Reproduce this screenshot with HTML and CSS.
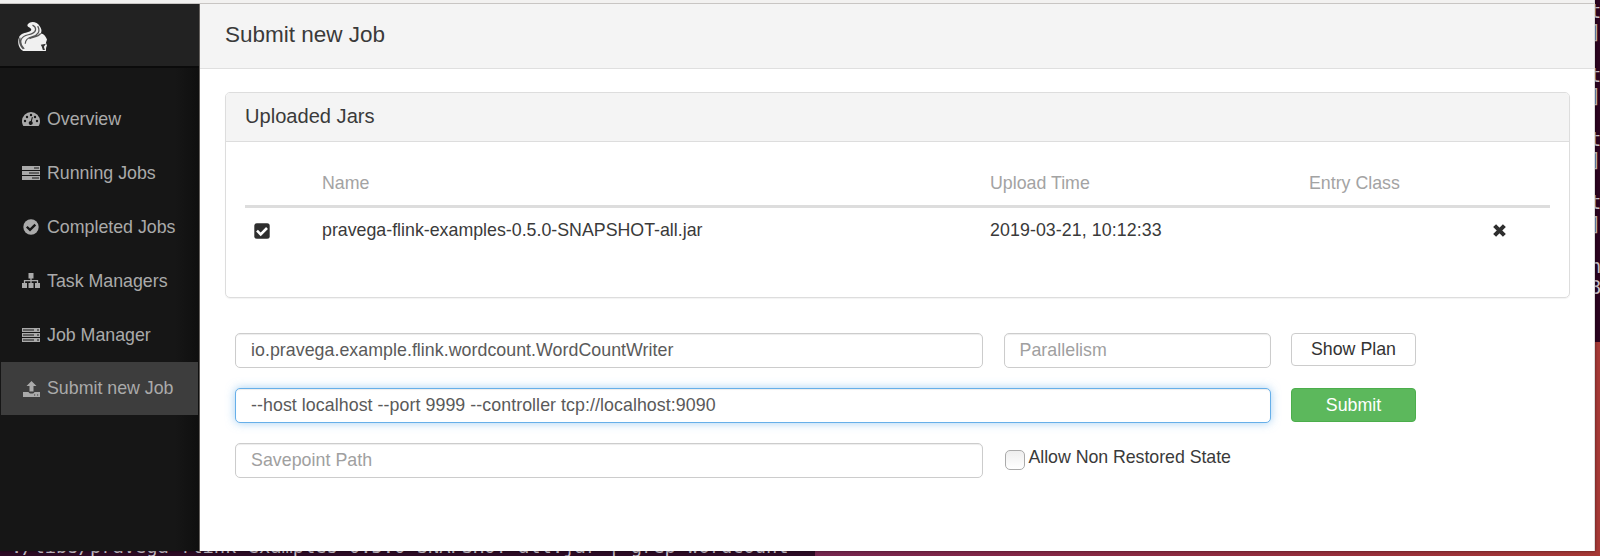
FILE: index.html
```
<!DOCTYPE html>
<html lang="en">
<head>
<meta charset="utf-8">
<title>Submit new Job</title>
<link rel="stylesheet" href="styles.css">
</head>
<body>
<div class="desktop">
  <div class="terminal">
    <div class="terminal-edge"><span>t</span><span>]</span><span></span><span>t</span><span>]</span><span></span><span>t</span><span>]</span><span></span><span>t</span><span>]</span><span></span><span>n</span><span>8</span></div>
  </div>
  <div class="terminal-foot"><span class="terminal-line">./libs/pravega-flink-examples-0.5.0-SNAPSHOT-all.jar | grep wordcount</span></div>
  <div class="window">
    <div class="chrome"></div>
    <div class="app">
      <aside class="sidebar">
        <div class="brand">
          <svg class="logo" viewBox="0 0 28 28"><path fill="#f0f0f0" d="M9 3c2-4 9-4 12 1 2 3 2 5 1 7 3 0 5 3 6 6l-1 3 1 3c-1 1-1 3-1 5H5C1 26-1 20 1 15c1-3 4-4 8-5 3-1 5-2 3-4-1-1-3-1-3-3z"/><path fill="none" stroke="#555" stroke-width="1.200" d="M14 3c4 2 4 6 0 8-4 2-9 1-11 6-1 3 0 6 3 9M19 4c3 5 0 9-5 10-4 1-7 3-7 7M22 11c-3 4-7 3-11 5M2 15c-1 4 0 8 3 11"/><path fill="#333" d="M22 22l5-1-2 3 1 3h-2l-1-3z"/></svg>
        </div>
        <nav class="menu">
          <a class="item"><svg class="icon" viewBox="0 0 18 16"><path fill="currentColor" d="M9 1a9 9 0 0 0-9 9c0 2 .5 3.600 1.400 5h15.200c.9-1.400 1.400-3 1.400-5a9 9 0 0 0-9-9z"/><g fill="#161616"><circle cx="3" cy="10" r="1.200"/><circle cx="5" cy="6" r="1.200"/><circle cx="9" cy="4" r="1.200"/><circle cx="13" cy="6" r="1.200"/><circle cx="15" cy="10" r="1.200"/><path d="M9.900 6l1 .3-1.100 4a2 2 0 1 1-1-.3z"/></g></svg>Overview</a>
          <a class="item"><svg class="icon" viewBox="0 0 18 16"><path fill="currentColor" d="M0 1h18v4H0zM0 6h18v4H0zM0 11h18v4H0z"/><path fill="#161616" d="M12 2.500h5v1h-5zM7 7.500h10v1H7zM10 12.500h7v1h-7z"/></svg>Running Jobs</a>
          <a class="item"><svg class="icon" viewBox="0 0 18 16"><circle cx="9" cy="8" r="7.700" fill="currentColor"/><path fill="none" stroke="#161616" stroke-width="2.300" d="M4.800 7.700l3.200 3.200 5.300-5.300"/></svg>Completed Jobs</a>
          <a class="item"><svg class="icon" viewBox="0 0 18 16"><path fill="currentColor" d="M6.500 0h5v5.500h-5zM0 10h5v5H0zM6.500 10h5v5h-5zM13 10h5v5h-5z"/><path fill="none" stroke="currentColor" stroke-width="1.300" d="M9 5v6M2.500 11V7.700h13V11"/></svg>Task Managers</a>
          <a class="item"><svg class="icon" viewBox="0 0 18 16"><path fill="currentColor" d="M0 1h18v4H0zM0 6h18v4H0zM0 11h18v4H0z"/><path fill="#161616" d="M1 2.500h11v1H1zM1 7.500h11v1H1zM1 12.500h11v1H1zM15 2.500h2v1h-2zM15 7.500h2v1h-2zM15 12.500h2v1h-2z"/></svg>Job Manager</a>
          <a class="item active"><svg class="icon" viewBox="0 0 18 16"><path fill="currentColor" d="M9.500 0l5 5h-3v5.500h-4V5h-3zM1 11h5.500c.5 1.300 1.500 1.500 3 1.500s2.500-.2 3-1.500H18v5H1z"/><path fill="#3d3d3d" d="M12 13.500h1.200v1H12zM15 13.500h1.200v1H15z"/></svg>Submit new Job</a>
        </nav>
      </aside>
      <main class="main">
        <header class="page-head"><h1 class="page-title">Submit new Job</h1></header>
        <section class="panel">
          <h2 class="panel-title">Uploaded Jars</h2>
          <div class="jars">
            <div class="row head"><span></span><span>Name</span><span>Upload Time</span><span>Entry Class</span><span></span></div>
            <div class="row"><span class="tick"><svg viewBox="0 0 16 16" width="16" height="16"><rect x=".3" y=".3" width="15.400" height="15.400" rx="2.500" fill="#2f2f2f"/><path fill="none" stroke="#fff" stroke-width="2.600" d="M3 7.600l3.700 3.700L13 5"/></svg></span><span>pravega-flink-examples-0.5.0-SNAPSHOT-all.jar</span><span class="date">2019-03-21, 10:12:33</span><span></span><span class="remove"><svg viewBox="0 0 12 12" width="13" height="13"><path stroke="#2f2f2f" stroke-width="3.800" d="M1.500 1.500l9 9M10.500 1.500l-9 9"/></svg></span></div>
          </div>
        </section>
        <form class="form">
          <input class="field" value="io.pravega.example.flink.wordcount.WordCountWriter">
          <input class="field" placeholder="Parallelism">
          <button class="btn" type="button">Show Plan</button>
          <input class="field args" value="--host localhost --port 9999 --controller tcp://localhost:9090">
          <button class="btn submit" type="button">Submit</button>
          <input class="field" placeholder="Savepoint Path">
          <label class="allow"><span class="box"></span>Allow Non Restored State</label>
        </form>
      </main>
    </div>
  </div>
</div>
</body>
</html>
```
FILE: styles.css
```
* { box-sizing: border-box; }
body { margin: 0; font-family: "Liberation Sans", Arial, sans-serif; font-size: 17.8px; color: #3a3a3a; }
.desktop { position: relative; width: 1600px; height: 556px; overflow: hidden; background: linear-gradient(90deg, #742650 50%, #822748 62%, #98303b 85%, #a63936 100%); }
.terminal { position: absolute; right: 0; top: 0; width: 10px; height: 342px; background: #2c0420; overflow: hidden; }
.terminal-edge { display: flex; flex-direction: column; padding: 1px 0 0; font: 18.7px/21.25px "DejaVu Sans Mono", monospace; color: #c9c1ca; }
.terminal-edge span { height: 21.250px; }
.terminal-foot { position: absolute; left: 0; bottom: 0; width: 815px; height: 20px; background: #2c0b25; overflow: hidden; }
.terminal-line { display: block; padding-left: 11px; font: 18.750px/22px "DejaVu Sans Mono", monospace; letter-spacing: -.02px; color: #c9c1ca; white-space: pre; }
.window { position: absolute; left: 0; top: 0; width: 1595px; height: 551px; display: flex; flex-direction: column; background: #fff; box-shadow: 0 0 3px rgba(0,0,0,.5); border-right: 1px solid #ddd; }
.chrome { height: 4px; background: #f2f1f0; border-bottom: 1px solid #c8c5c3; }
.app { flex: 1; display: flex; }
.sidebar { width: 200px; background: linear-gradient(90deg, #161616 88%, #0f0f0f); border-right: 1px solid #66625f; }
.brand { height: 64px; padding: 18px; background: #222; border-bottom: 2px solid #0b0b0b; }
.logo { display: block; width: 29px; height: 29px; }
.menu { display: flex; flex-direction: column; gap: 1px; padding: 25px 1px 0; }
.item { display: flex; align-items: center; gap: 7px; height: 52.900px; padding-left: 21px; color: #aaa; white-space: nowrap; }
.item.active { background: #3d3d3d; }
.icon { width: 18px; height: 16px; }
.main { flex: 1; }
.page-head { height: 65px; background: #f4f4f4; border-bottom: 1px solid #dfdfdf; padding: 17px 25px; }
.page-title { margin: 0; font-size: 22.500px; line-height: 28px; font-weight: 400; }
.panel { margin: 23px 24px 0 25px; height: 206px; border: 1px solid #ddd; border-radius: 5px; box-shadow: 0 1px 1px rgba(0,0,0,.05); overflow: hidden; }
.panel-title { margin: 0; height: 49px; padding: 0 19px; background: #f4f4f4; border-bottom: 1px solid #ddd; font-size: 20.100px; line-height: 46px; font-weight: 400; }
.jars { padding: 19px 19px 0; }
.row { display: grid; grid-template-columns: 67px 668px 319px 184px 1fr; align-items: center; height: 47px; padding: 0 0 2px 9px; }
.row > :nth-child(2) { padding-left: 1px; }
.row > :nth-child(n+3) { padding-left: 1px; }
.row.head { height: 47px; padding-bottom: 0; color: #a3a3a3; border-bottom: 3px solid #ddd; }
.date { letter-spacing: .08px; }
.tick svg, .remove svg { display: block; }
.form { display: grid; grid-template-columns: 748px 267px 125px; column-gap: 20.500px; row-gap: 20px; padding: 35px 0 0 35px; align-items: start; }
.field { width: 100%; height: 35px; border: 1px solid #ccc; border-radius: 5px; padding: 0 15px; font: inherit; letter-spacing: .04px; color: #5a5a5a; background: #fff; box-shadow: inset 0 1px 1px rgba(0,0,0,.075); }
.field::placeholder { color: #a0a0a0; opacity: 1; }
.args { grid-column: span 2; letter-spacing: .065px; border-color: #66afe9; box-shadow: inset 0 1px 1px rgba(0,0,0,.075), 0 0 10px rgba(102,175,233,.6); }
.btn { font: inherit; padding: 0; border-radius: 4px; border: 1px solid #ccc; background: #fff; color: #333; height: 33px; }
.submit { height: 34px; background: #5cb85c; border-color: #4cae4c; color: #fff; }
.allow { display: flex; align-items: flex-start; gap: 4px; padding-top: 3px; line-height: 22px; letter-spacing: -.05px; white-space: nowrap; }
.box { width: 20px; height: 20px; margin: 4px 0 0 1px; border: 1px solid #aaa; border-radius: 5px; background: linear-gradient(#eee, #fff); }
```
